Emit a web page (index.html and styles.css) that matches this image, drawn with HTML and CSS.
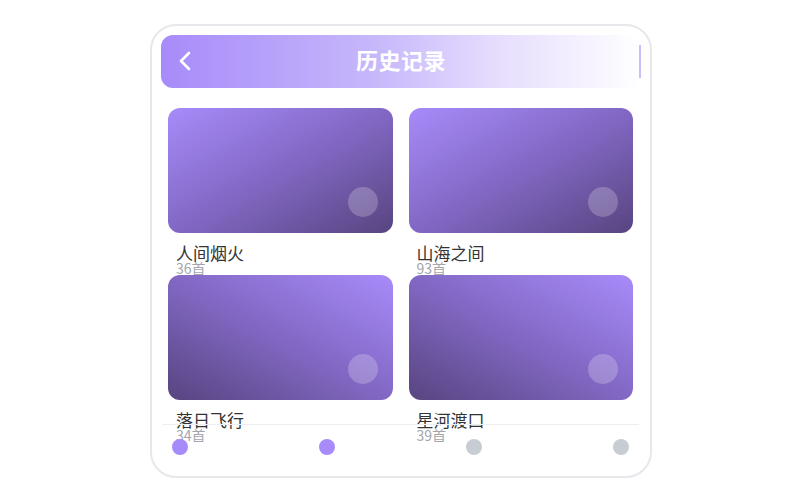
FILE: index.html
```
<!DOCTYPE html>
<html lang="zh">
<head>
<meta charset="utf-8">
<link rel="stylesheet" href="styles.css">
</head>
<body>
<div class="frame">
  <div class="header">
    <svg class="back" width="14" height="20" viewBox="0 0 14 20"><path d="M11 2 L3 10 L11 18" fill="none" stroke="#fff" stroke-width="2.6" stroke-linecap="round" stroke-linejoin="round"/></svg>
    <div class="title">历史记录</div>
  </div>
  <div class="grid">
    <div class="item">
      <div class="card card-a"><span class="dot-play"></span></div>
      <div class="name">人间烟火</div>
      <div class="count">36首</div>
    </div>
    <div class="item">
      <div class="card card-a"><span class="dot-play"></span></div>
      <div class="name">山海之间</div>
      <div class="count">93首</div>
    </div>
    <div class="item">
      <div class="card card-b"><span class="dot-play"></span></div>
      <div class="name">落日飞行</div>
      <div class="count">34首</div>
    </div>
    <div class="item">
      <div class="card card-b"><span class="dot-play"></span></div>
      <div class="name">星河渡口</div>
      <div class="count">39首</div>
    </div>
  </div>
  <div class="nav">
    <span class="ndot on"></span>
    <span class="ndot on"></span>
    <span class="ndot"></span>
    <span class="ndot"></span>
  </div>
</div>
</body>
</html>
```
FILE: styles.css
```
* { box-sizing: border-box; }
html, body { margin: 0; padding: 0; background: #fff; }
body { font-family: "Noto Sans CJK SC", "Noto Sans", sans-serif; }
.frame {
  position: relative;
  margin: 24px 0 0 150px;
  width: 502px;
  height: 454px;
  border: 2px solid #e7e7ec;
  border-radius: 26px;
  overflow: hidden;
  background: #fff;
}
.header {
  position: relative;
  margin: 9px 9px 0 9px;
  height: 53px;
  border-radius: 12px;
  background: linear-gradient(to right, #a78bfa 0%, #c7b8fb 45%, #e6ddfd 70%, #ffffff 100%);
  display: flex;
  align-items: center;
  justify-content: center;
  padding-bottom: 6px;
}
.header::after {
  content: "";
  position: absolute;
  right: 0;
  top: 10px;
  bottom: 10px;
  width: 2px;
  background: #cbbdfb;
}
.back {
  position: absolute;
  left: 17px;
  top: 16px;
}
.title {
  color: #fff;
  font-size: 22px;
  font-weight: 700;
  letter-spacing: 0.5px;
  line-height: 1;
}
.grid {
  padding: 20px 17px 0 16px;
  display: grid;
  grid-template-columns: 1fr 1fr;
  column-gap: 16px;
}
.item {
  height: 167px;
  overflow: hidden;
}
.card {
  position: relative;
  height: 125px;
  border-radius: 12px;
}
.card-a { background: linear-gradient(to bottom right, #a78bfa 0%, #8268c4 50%, #574580 100%); }
.card-b { background: linear-gradient(to bottom left, #a78bfa 0%, #8268c4 50%, #574580 100%); }
.dot-play {
  position: absolute;
  right: 15px;
  bottom: 16px;
  width: 30px;
  height: 30px;
  border-radius: 50%;
  background: rgba(255, 255, 255, 0.22);
}
.name {
  margin-top: 11px;
  padding-left: 8px;
  font-size: 17px;
  line-height: 17px;
  color: #333;
}
.count {
  padding-left: 8px;
  font-size: 14px;
  line-height: 15px;
  color: #a3a6ad;
}
.nav {
  position: absolute;
  left: 10px;
  right: 11px;
  top: 398px;
  border-top: 1px solid #eceef1;
  padding: 14px 10px;
  display: flex;
  justify-content: space-between;
}
.ndot {
  width: 16px;
  height: 16px;
  border-radius: 50%;
  background: #c8ccd3;
}
.ndot.on { background: #a78bfa; }
```
